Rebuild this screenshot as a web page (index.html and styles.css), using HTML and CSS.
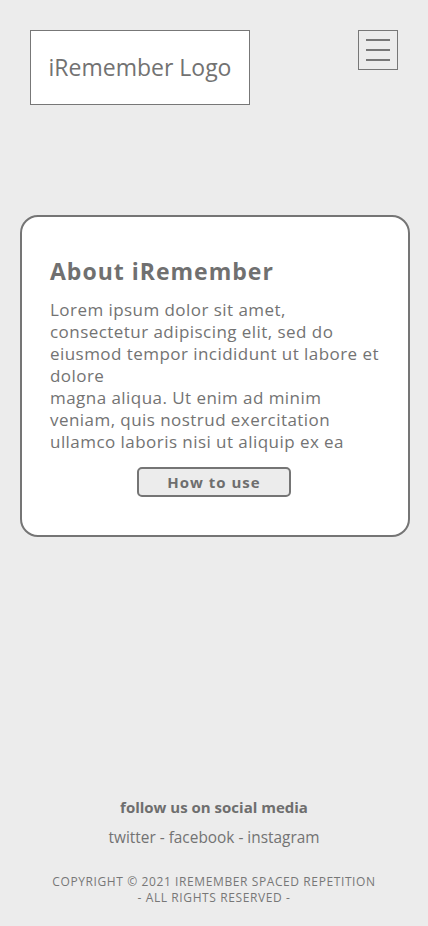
FILE: index.html
```html
<!DOCTYPE html>
<html lang="en">
<head>
<meta charset="utf-8">
<meta name="viewport" content="width=device-width, initial-scale=1">
<title>iRemember</title>
<link rel="stylesheet" href="styles.css">
</head>
<body>
<header class="header">
  <div class="logo">iRemember Logo</div>
  <button class="menu" aria-label="menu">
    <span class="bar"></span><span class="bar"></span><span class="bar"></span>
  </button>
</header>
<main class="main">
  <section class="card">
    <h1 class="card-title">About iRemember</h1>
    <p class="card-text">Lorem ipsum dolor sit amet, consectetur adipiscing elit, sed do eiusmod tempor incididunt ut labore et dolore<br>magna aliqua. Ut enim ad minim veniam, quis nostrud exercitation ullamco laboris nisi ut aliquip ex ea</p>
    <div class="card-actions"><button class="btn">How to use</button></div>
  </section>
</main>
<footer class="footer">
  <div class="follow">follow us on social media</div>
  <div class="social">twitter - facebook - instagram</div>
  <div class="copy">Copyright © 2021 iRemember spaced repetition<br>- all rights reserved -</div>
</footer>
</body>
</html>
```
FILE: styles.css
```css
* { box-sizing: border-box; }
html, body { margin: 0; padding: 0; }
body {
  background: #ececec;
  color: #707070;
  font-family: "Open Sans", "Noto Sans", sans-serif;
  min-height: 100vh;
  display: flex;
  flex-direction: column;
}
.header {
  display: flex;
  justify-content: space-between;
  align-items: flex-start;
  padding: 30px 30px 0 30px;
}
.logo {
  width: 220px;
  height: 75px;
  background: #fff;
  border: 1px solid #777;
  display: flex;
  align-items: center;
  justify-content: center;
  font-size: 23px;
  color: #727272;
  padding-bottom: 1px;
}
.menu {
  width: 40px;
  height: 40px;
  background: transparent;
  border: 1px solid #777;
  padding: 8px 7px;
  display: flex;
  flex-direction: column;
  justify-content: space-between;
  align-items: stretch;
  cursor: pointer;
}
.bar {
  display: block;
  height: 2px;
  background: #777;
}
.main {
  flex: 1;
  padding: 110px 18px 0 20px;
}
.card {
  background: #fff;
  border: 2px solid #757575;
  border-radius: 18px;
  padding: 38px 28px 38px 28px;
}
.card-title {
  margin: 0 0 12px 0;
  font-size: 23px;
  font-weight: 700;
  letter-spacing: 1px;
  line-height: 32px;
  color: #707070;
}
.card-text {
  margin: 0;
  font-size: 17px;
  letter-spacing: 0.45px;
  line-height: 22px;
  color: #737373;
}
.card-actions {
  display: flex;
  justify-content: center;
  padding-top: 14px;
  padding-right: 2px;
}
.btn {
  width: 154px;
  height: 30px;
  background: #ececec;
  border: 2px solid #757575;
  border-radius: 5px;
  font-family: inherit;
  font-size: 15px;
  font-weight: 700;
  letter-spacing: 1px;
  color: #6e6e6e;
  padding: 0;
}
.footer {
  text-align: center;
  padding: 0 0 20px 0;
}
.follow {
  font-size: 15px;
  font-weight: 700;
  line-height: 22px;
  color: #6e6e6e;
}
.social {
  font-size: 15.4px;
  line-height: 22px;
  margin-top: 9px;
  color: #737373;
}
.copy {
  margin-top: 25px;
  font-size: 12px;
  line-height: 16px;
  letter-spacing: 0.6px;
  text-transform: uppercase;
  color: #777;
}
```
